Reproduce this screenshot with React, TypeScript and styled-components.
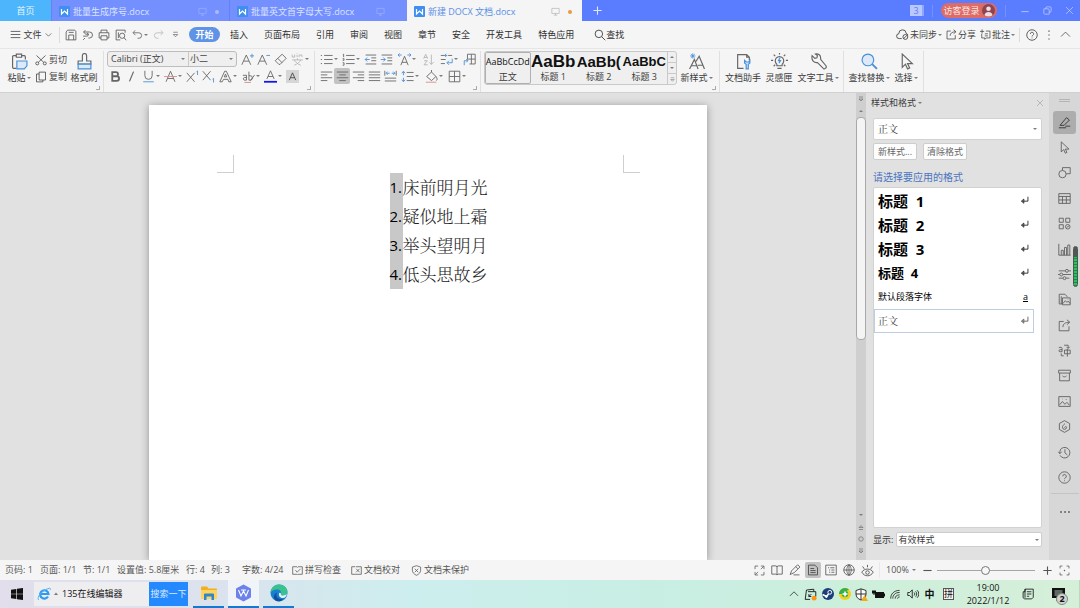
import React from 'react';
import styled, { createGlobalStyle, css } from 'styled-components';

const UI_FONT = '"Open Sans", "Noto Sans CJK SC", sans-serif';
const SERIF_FONT = '"Noto Serif CJK SC", "Noto Sans CJK SC", serif';
const BLUE = '#4a90d9';

const GlobalStyle = createGlobalStyle`
  * { box-sizing: border-box; }
  body { margin: 0; font: 9px/12px ${UI_FONT}; color: #3c3c3c; background: #e1e1e1; overflow: hidden; }
  button, input, select { font: inherit; color: inherit; margin: 0; padding: 0; border: 0; background: none; border-radius: 0; }
  ul, ol { list-style: none; margin: 0; padding: 0; }
  a { color: inherit; text-decoration: none; }
`;

/* ---------- icons ---------- */

const icons: Record<string, React.ReactNode> = {
  menu: <path d="M1 3.500h14M1 8h14M1 12.500h14" />,
  chevDown: <path d="M3 6l5 5 5-5" />,
  chevUp: <path d="M1.500 11L8 4.500l6.500 6.500" />,
  save: <path d="M2 14.500h12.500V3l-1.500-1.500H3.500L1.500 4v10.500zM5 14.500V8h6.500v6.500M5 4.500h6.500" />,
  exportPdf: <path d="M4.500 1.500L2 4l2.500 2.500M2.500 4H10a3.500 3.500 0 0 1 0 8H8.500M9 7H4.500M1.500 9.500h5a2 2 0 0 0 0-4M4 12l-2.500 2.500" />,
  print: <path d="M4 5V1.500h8V5M4 12H1.500V5h13v7H12M4 9h8v5.500H4z" />,
  preview: <><path d="M13.500 5V1.500H1.500v13H7M4.500 4.500V12" /><circle cx="9.500" cy="9" r="3.500" /><path d="M12 11.500l3 3.500" /></>,
  undo: <path d="M4.500 2L1.500 5.500 5 9M2 5.500h8a4 4 0 0 1 0 8H8" />,
  redo: <path d="M11.500 2l3 3.500L11 9M14 5.500H6a4 4 0 0 0 0 8h2" />,
  more: <path d="M4 4h8M4 8l4 4 4-4z" />,
  moreUp: <path d="M4 13h8M4 9l4-4 4 4z" />,
  search: <><circle cx="6.500" cy="6.500" r="5" /><path d="M10.500 10.500L15 15" /></>,
  cloud: <><path d="M7 13H4a3 3 0 0 1-.5-6 4.500 4.500 0 0 1 9-.5 3 3 0 0 1 2 2.500" /><circle cx="11.500" cy="11" r="3" /><path d="M9.500 13l4-4" /></>,
  share: <path d="M7 3H1.500v11.500h12V9M6 10c0-4 3-6 8-6M11 1l3.500 3L11 7" />,
  comment: <path d="M8.500 3H14.500v10H9l-2 2v-2H2.500V7M0 3.500h6M3 .5v6M7 7h4.500M7 10h4.500" />,
  help: <><circle cx="8" cy="8" r="7" /><path d="M5.800 6.500a2.200 2.200 0 1 1 3.200 2c-.7.4-1 .8-1 1.500M8 11.500v1" /></>,
  kebab: <path d="M8 2v1.500M8 7.200v1.500M8 12.500V14" strokeWidth="1.600" />,
  paste: <><path d="M5 14.500H2.500a1 1 0 0 1-1-1v-10a1 1 0 0 1 1-1H5M10 2.500h2.500a1 1 0 0 1 1 1V6M5 1h5v3H5z" /><path d="M5.500 7.500h9.500v4.500l-2.500 3h-7z" fill="#dbe9f8" stroke={BLUE} /></>,
  cut: <><circle cx="3" cy="12.500" r="2" /><circle cx="13" cy="12.500" r="2" /><path d="M4.500 11L14 2M11.500 11L2 2" /></>,
  copy: <path d="M5.500 1.500h8.500v10.500H5.500zM5.500 4h-3.500v10.500h8.500v-2.500" />,
  brush: <><path d="M6 7.500V2.500a2 2 0 0 1 4 0v5h4v3H2v-3z" /><path d="M2 10.500h12v4.500H2z" fill="#dbe9f8" stroke={BLUE} /></>,
  fontUp: <><path d="M1 14.500L6.500 2.500l5.500 12M3.200 10h6.600" /><path d="M11 3.500h5M13.500 1v5" stroke={BLUE} /></>,
  fontDown: <><path d="M1 14.500L6.500 2.500l5.500 12M3.200 10h6.600" /><path d="M11.500 3h4.500" stroke={BLUE} /></>,
  eraser: <path d="M6 14L1.500 9.500 10 1.500l5 5L7.500 14zM4.500 6.500l5.500 5.500" />,
  pinyin: <path d="M1.500 2v3h3V2M7.500 2.500V5M10 5V2.500h3.500V5M7.500.5v1M1.500 8.500h13M8 6.500v2M4 8.500c1.500 3 4 5 8 6.500M12 8.500c-1.500 3-4 5-8 6.500" />,
  bold: <path d="M4 2.500h4.500a2.600 2.600 0 0 1 0 5.200H4zM4 7.700h5.500a2.900 2.900 0 0 1 0 5.800H4z" strokeWidth="2.200" />,
  italic: <path d="M10.500 2L5.500 14" strokeWidth="1.500" />,
  underline: <><path d="M3.500 1v6a4.500 4.500 0 0 0 9 0V1" /><path d="M1.500 14.500h13" stroke={BLUE} /></>,
  strike: <><path d="M2.500 14.500L8 1.500l5.500 13M4.500 10.500h7" /><path d="M0 8h16" stroke="#d98a8a" /></>,
  superscript: <><path d="M1 3.500l9.500 11M10.500 3.500L1 14.500" /><path d="M13 2l1.200-.8v5" stroke={BLUE} /></>,
  subscript: <><path d="M1 1.500l9.500 11M10.500 1.500L1 12.500" /><path d="M13 11.200l1.200-.8v5" stroke={BLUE} /></>,
  textEffect: <path d="M1 14.500L7 1.500h2l6 13h-3l-1-3H5.500l-1.500 3zM6.500 8.500L8 5l1.500 3.500z" />,
  highlight: <><path d="M1 6.500h4.500V12.500H3a1.700 1.700 0 0 1 0-3.300h2.500M8.500 2v10.500h1.500a2.700 2.700 0 0 0 0-5.500H8.500M10.500 13l5-7" /><path d="M3 15.300h8" stroke="#d98a8a" /></>,
  fontColor: <><path d="M3.500 11L8 1l4.500 10M5 8h6" /><path d="M0 14.500h16" stroke="#1414f0" strokeWidth="2.200" /></>,
  shade: <><path d="M0 0h16v16H0z" fill="#d6d6d6" stroke="none" /><path d="M4 12.500L8 3.500l4 9M5.500 9.500h5" stroke="#444" /></>,
  bullets: <path d="M5 3h10.500M5 8h10.500M5 13h10.500M1 3h1.500M1 8h1.500M1 13h1.500" />,
  numbers: <path d="M5 3h10.500M5 8h10.500M5 13h10.500M1 2l1-.5V5M.8 7h1.700v2H.8M.8 12h1.700v3H.8" />,
  outdent: <><path d="M2 2.500h13M9 6h6M9 9.500h6M2 13.500h13" /><path d="M7 8H1.500M4 5.500L1.500 8 4 10.500" stroke={BLUE} /></>,
  indent: <><path d="M2 2.500h13M9 6h6M9 9.500h6M2 13.500h13" /><path d="M1 8h5.500M4 5.500L6.500 8 4 10.500" stroke={BLUE} /></>,
  charScale: <><path d="M3.500 15L8 4l4.500 11M5 11.500h6" /><path d="M0 2.500h4.500M0 2.500L2 .5M0 2.500l2 2M16 2.500h-4.500M16 2.500L14 .5M16 2.500l-2 2" stroke={BLUE} /></>,
  sort: <path d="M2 7l2.500-5.500L7 7M2.500 5.500h4M2.500 9.500h4L2.500 14.500h4.500M11.500 2v12M9 11.500l2.500 2.500 3-3" />,
  wrap: <><path d="M1 3h5M10 3h5M1 8h6M1 13h5" /><path d="M6 3h3M7.500 1L6 3l1.500 2M15 7v5H9M11 9.500L8.500 12 11 14.500" stroke={BLUE} /></>,
  tableTool: <><path d="M5.500 8V1.500H15v12H8M10.300 1.500v12M5.500 7.500H15" /><path d="M1.500 15V9.500H6M4 7.500l2 2-2 2" stroke={BLUE} /></>,
  alignLeft: <path d="M1 2.500h14M1 6h8M1 9.500h14M1 13h8" />,
  alignCenter: <path d="M1 2.500h14M4 6h8M1 9.500h14M4 13h8" />,
  alignRight: <path d="M1 2.500h14M7 6h8M1 9.500h14M7 13h8" />,
  alignJustify: <path d="M1 2.500h14M1 6h14M1 9.500h14M1 13h14" />,
  distribute: <><path d="M1 1v6M15 1v6M1 10h14M1 13.500h14" /><path d="M3 4h4M9.500 4h4M4.500 2L2.500 4l2 2M11.500 2l2 2-2 2" stroke={BLUE} /></>,
  lineSpace: <><path d="M7 3h8.500M7 8h8.500M7 13h8.500" /><path d="M3 2v4.500M3 9.500V14M1 4l2-2.500L5 4M1 12l2 2.500L5 12" stroke={BLUE} /></>,
  bucket: <><path d="M2 8l6-5.500L13.500 8 8 13zM8 2.500V0M13.500 8c1.500 2 2 4 .5 5" /><path d="M1 15h13" stroke="#d98a8a" /></>,
  borders: <path d="M1.500 1.500h13v13h-13zM8 1.500v13M1.500 8h13" />,
  newStyle: <><path d="M1.500 15L6 6l3.500 9M3 12h5.500M7.500 8L10.500 3l5 12M9.200 11.500h5" /><path d="M4.500 .3v5M2 2.800h5M2.700 1l3.600 3.600M6.300 1L2.700 4.600" stroke={BLUE} strokeWidth=".8" /></>,
  docHelper: <><path d="M8 14.500H2.500v-13H11L13.500 4v3M11 1.500V4h2.500" /><path d="M9 7v2.500l1.500 1.200V15h2v-4.300L14 9.500V7l-1 1.500h-2.500z" fill="#cfe3f8" stroke={BLUE} /></>,
  idea: <><path d="M5.500 12V10.500a4 4 0 1 1 5 0V12zM6 14.500h4M8 0v1.500M0 7h2M14 7h2M2.500 1.500l1.500 1.500M13.500 1.500L12 3M2.500 12.500L4 11M13.500 12.500L12 11" /><path d="M8.500 4.500L7 7.200h2L7.500 9.500" stroke={BLUE} /></>,
  wrench: <path d="M2 2.500l2.500 2.500 2-.5.500-2L5 1c2.500-.8 5 .8 5 3.500v1.500l5 6a1.800 1.800 0 0 1-2.500 2.500L7 9C4 9.500 1 7 2 2.500z" />,
  findReplace: <><circle cx="6.500" cy="6.500" r="5.500" fill="#dbe9f8" stroke={BLUE} /><path d="M10.500 10.500L15 15" strokeWidth="1.800" stroke={BLUE} /></>,
  cursor: <path d="M4 1v12.500l3-3 2 4.500 2-1-2-4h4.500z" />,
  close: <path d="M2 2l12 12M14 2L2 14" />,
  minimise: <path d="M2 9h12" />,
  restore: <path d="M5 5V3.500a2 2 0 0 1 2-2h5.500a2 2 0 0 1 2 2V9a2 2 0 0 1-2 2H11M2 5h7a2 2 0 0 1 2 2v7.500H3.500A2 2 0 0 1 1.500 13V5z" />,
  plus: <path d="M8 2v12M2 8h12" strokeWidth="1.600" />,
  minus: <path d="M2 8h12" strokeWidth="1.600" />,
  monitor: <path d="M1.500 2.500h13v9h-13zM8 11.500v3M5 14.500h6" />,
  penEdit: <path d="M2.500 11.500L10.500 2l3.500 3-6.500 6.500zM9 12.500h6M1 14.500h9" />,
  shapes: <><circle cx="5.500" cy="10" r="4.500" /><path d="M5.500 5.500V2h9.500v7.500h-5" /></>,
  grid: <path d="M1 2h14v12H1zM1 5.500h14M1 9.800h14M5.500 5.500V14M10.300 5.500V14" />,
  apps: <><path d="M1.500 1.500h5v5h-5zM9.500 1.500h5v5h-5zM1.500 9.500h5v5h-5z" /><circle cx="12" cy="12" r="2.800" /><path d="M10.500 13l3-2" /></>,
  chart: <path d="M1 1v14h14.500M4 15V9h2.500v6M8 15V5.500h2.500V15M12 15V2.500h2.500V15" />,
  sliders: <><path d="M1 3.500h8M13 3.500h3M0 8h2M6 8h10M1 12.500h5M10 12.500h4" /><circle cx="11" cy="3.500" r="1.800" /><circle cx="4" cy="8" r="1.800" /><circle cx="8" cy="12.500" r="1.800" /></>,
  docImage: <path d="M5 13.500H1.500V1.500h7L11 4v1M4 4v9.500M5.500 6h9.500v8.500H5.500zM6 13l3-3.500 2 2 1.500-1.500 2.500 3M12 8h.5" />,
  translate: <path d="M1 4.500c2-1 4-.5 4 1V9.500H2.500a1.200 1.200 0 0 1 0-2.500H5M7.500 1.500h5v3.500M10.500 3.500L12.500 5.500l2-2M8 7.500h7v4.500H8zM11.500 6v9.500M7 14.500H4v-3" />,
  archive: <path d="M.8 1.500h14.400v3.500H.8zM2 5v9.500h12V5M5.500 8.500c1 1.500 4 1.500 5 0" />,
  image: <path d="M1 2h14v12H1zM2 12l3.500-4 3 3.500L11 9l3 3.500M9.500 5.500h1M5 5h.5" />,
  hex: <path d="M8 .8l6.300 3.500v7.400L8 15.200l-6.300-3.500V4.300zM8.500 4.500c-2 1.500-3 3-3 4.500a2.500 2.500 0 0 0 5 0c0-1.500-2-1-2.500.5" />,
  history: <path d="M2.500 5A6.500 6.500 0 1 1 2.500 11.500M.3 7L2.300 9.500 4.500 7M8.500 4v4.500l3 2.500M2.300 9c-.3-1.500 0-3 .7-4" />,
  dots: <path d="M1.500 8h2.500M6.800 8h2.500M12 8h2.500" strokeWidth="2" />,
  returnMark: <path d="M13 1v6.500H4M7 4.500L3.500 7.500 7 10.500z" />,
  spell: <path d="M1 2.500h6l1 1 1-1h6v11H9l-1 1-1-1H1zM5 7.500l2.500 3 5-5" />,
  proof: <path d="M6 2.500H1v11h6M7 2.500h8v11H7M7.500 5.500l5 5M12.500 5.500l-5 5" />,
  shield: <path d="M8 1l6 2v4.500c0 3.500-2.500 6-6 7.500-3.500-1.500-6-4-6-7.500V3zM5.500 5.500l5 5M10.500 5.500l-5 5" />,
  expand: <path d="M6 1.500H1.500V6M10 1.500h4.500V6M6 14.500H1.500V10M10 14.500h4.500V10M14 2l-4 4M2 14l4-4" />,
  book: <path d="M8 3v11M1 2.500h5.500L8 3.500l1.500-1H15v11H9.500L8 14.500l-1.500-1H1z" />,
  pen: <path d="M1.500 14l2-5L11.500 1l3 3L7 11.500zM6 14.500h8M9 3.500l3 3" />,
  page: <path d="M2 1.500h8.500L14 5v9.500H2zM4.500 6h5M4.500 8.700h7M4.500 11.400h7" strokeWidth="1.300" />,
  outline: <path d="M1 1.500h14v13H1zM4 5h1.500M7 5h5.500M5.500 8h1.500M8.500 8h4M5.500 11h1.500M8.500 11h4" />,
  globe: <><circle cx="8" cy="8" r="7" /><path d="M1 8h14M8 1c-4 4-4 10 0 14M8 1c4 4 4 10 0 14M8 1v14" /></>,
  eye: <><path d="M1 10c3-5 11-5 14 0-3 6-11 6-14 0zM8 1v3M2 3l2 3M14 3l-2 3" /><circle cx="8" cy="10.500" r="2.200" /></>,
  fit: <path d="M5 1.500H1.500V5M11 1.500h3.500V5M5 14.500H1.500V11M11 14.500h3.500V11M7 8h2M8 7v2" />,
  tile: <path d="M12 4V1.500L3 2.500l-1.500 11.500h6M5 4.500h9.500v6H13M6 10.500l3-3M6 7.500v3h3" />,
  wifi: <path d="M1 14C1 7 6 2 14 2M4 14c0-5 3.500-9 10-9M7.500 14c0-3 2-5.500 6.500-5.500M11 14c0-1.500 1-2.500 3-2.500" />,
  volume: <path d="M1 6v4h2.500L7 13.500v-11L3.500 6zM9.500 6c1 1 1 3 0 4M11.500 4.500c2 2 2 5 0 7M13.500 3c3 3 3 7 0 10" />,
  notes: <path d="M4 1.500h11v11l-2 2H3.500l-2-1.500V5H4zM4 1.500V13M6.500 5h6M6.500 8h6M6.500 11h3" />,
};

const Svg = styled.svg<{ $size: number }>`
  display: block;
  flex: none;
  width: ${(p) => p.$size}px;
  height: ${(p) => p.$size}px;
  fill: none;
  stroke: currentColor;
  stroke-width: 1.1;
`;

const Icon = ({ name, size = 13 }: { name: string; size?: number }) => (
  <Svg viewBox="0 0 16 16" $size={size} aria-hidden="true">{icons[name]}</Svg>
);

const Caret = styled.span`
  flex: none;
  border: 2px solid transparent;
  border-top-color: #7d7d7d;
  border-bottom: 0;
`;

/* ---------- shell ---------- */

const Shell = styled.div`
  display: grid;
  grid-template-rows: 21px 27px 45px minmax(0, 1fr) 20px 28px;
  height: 100vh;
`;

/* ---------- title bar ---------- */

const TitleBar = styled.header`
  display: flex;
  align-items: stretch;
  background: #5a7cff;
  color: #fff;
`;

const HomeTab = styled.button`
  flex: 0 0 51px;
  background: #4db5fb;
  color: #e8f6ff;
`;

const Tab = styled.button<{ $active?: boolean }>`
  display: flex;
  align-items: center;
  flex: 0 1 178px;
  gap: 3px;
  padding: 2px 10px 0 7px;
  border-left: 1px solid #6581f5;
  background: #7490ff;
  color: #dbe3ff;
  white-space: nowrap;
  ${(p) => p.$active && css`
    flex-basis: 175px;
    padding-left: 6px;
    border-left-color: #f5f5f5;
    background: #f5f5f5;
    color: #5b8fe6;
  `}
`;

const TabName = styled.span`
  flex: 1;
  text-align: left;
`;

const TabState = styled.span<{ $active?: boolean }>`
  display: flex;
  align-items: center;
  color: ${(p) => (p.$active ? '#aaa' : '#9db2ff')};
`;

const Dot = styled.span<{ $color: string }>`
  width: 4px;
  height: 4px;
  margin-left: 8px;
  border-radius: 50%;
  background: ${(p) => p.$color};
`;

const DocBadge = styled.svg`
  width: 11px;
  height: 11px;
  flex: none;
`;

const NewTab = styled.button`
  display: grid;
  place-items: center;
  width: 31px;
  color: #dfe6ff;
`;

const WindowTools = styled.div`
  display: flex;
  align-items: center;
  margin-left: auto;
  color: #d5deff;
`;

const WindowButton = styled.button`
  display: grid;
  place-items: center;
  width: 22px;
  height: 21px;
`;

const TabCount = styled.button`
  width: 14px;
  height: 11px;
  background: #b9c8ff;
  color: #5a7cff;
  line-height: 11px;
  border-right: 2px solid #8fa6ff;
`;

const TitleDivider = styled.span`
  width: 1px;
  height: 12px;
  margin: 0 8px;
  background: #7590ff;
`;

const Login = styled.button`
  display: flex;
  align-items: center;
  justify-content: center;
  gap: 2px;
  width: 56px;
  height: 15px;
  border-radius: 8px;
  background: #dd6c66;
  color: #fbe5e3;
`;

/* ---------- menu bar ---------- */

const MenuBar = styled.nav`
  display: flex;
  align-items: center;
  background: #f5f5f5;
  white-space: nowrap;
`;

const FileMenu = styled.button`
  display: flex;
  align-items: center;
  justify-content: space-between;
  width: 60px;
  height: 16px;
  padding: 0 6px 0 10px;
  border-right: 1px solid #dcdcdc;
`;

const QuickTools = styled.div`
  display: flex;
  align-items: center;
  padding: 0 5px 0 3px;
  color: #555;
`;

const StartTab = styled.button`
  width: 31px;
  height: 15px;
  border-radius: 8px;
  background: #5f93e6;
  color: #fff;
  font-weight: 700;
`;

const MenuItems = styled.div`
  display: flex;
  align-items: center;
  gap: 16px;
  margin-left: 10px;
`;

const MenuItem = styled.button<{ $search?: boolean }>`
  display: flex;
  align-items: center;
  color: #2f2f2f;
  ${(p) => p.$search && css`margin-left: 4px;`}
`;

const MenuRight = styled.div`
  display: flex;
  align-items: center;
  margin-left: auto;
  padding-right: 6px;
  color: #444;
`;

const SideAction = styled.button`
  display: flex;
  align-items: center;
  gap: 1px;
  margin-right: 4px;
`;

const MenuDivider = styled.span`
  width: 1px;
  height: 14px;
  margin-right: 4px;
  background: #dcdcdc;
`;

/* ---------- ribbon ---------- */

const Ribbon = styled.section`
  display: flex;
  padding-top: 2px;
  border-top: 1px solid #e6e6e6;
  border-bottom: 1px solid #d0d0d0;
  background: #f5f5f5;
  color: #666;
  white-space: nowrap;
`;

const Group = styled.div<{ $width: number; $corner?: boolean; $columns?: boolean }>`
  position: relative;
  display: flex;
  flex-direction: ${(p) => (p.$columns ? 'row' : 'column')};
  flex: none;
  width: ${(p) => p.$width}px;
  padding: 0 3px;
  border-right: 1px solid #e0e0e0;
  ${(p) => p.$corner && css`
    &::after {
      content: '';
      position: absolute;
      right: 3px;
      bottom: 2px;
      width: 3px;
      height: 3px;
      border: solid #aaa;
      border-width: 0 1px 1px 0;
    }
  `}
`;

const ToolRow = styled.div`
  display: flex;
  height: 17px;
`;

const Tool = styled.button<{ $width?: number; $active?: boolean; $dim?: boolean }>`
  display: flex;
  align-items: center;
  justify-content: center;
  gap: 1px;
  flex: none;
  width: ${(p) => p.$width ?? 16}px;
  height: 16px;
  border-radius: 2px;
  background: ${(p) => (p.$active ? '#c2c2c2' : 'transparent')};
  ${(p) => p.$dim && css`color: #b5b5b5;`}
`;

const BigTool = styled.button<{ $width: number }>`
  display: flex;
  flex-direction: column;
  align-items: center;
  flex: none;
  gap: 2px;
  width: ${(p) => p.$width}px;
  height: 34px;
  padding-top: 2px;
`;

const ToolLabel = styled.span`
  display: flex;
  align-items: center;
  gap: 1px;
  color: #3c3c3c;
`;

const SmallStack = styled.div`
  display: flex;
  flex-direction: column;
  width: 32px;
`;

const SmallTool = styled.button`
  display: flex;
  align-items: center;
  gap: 2px;
  height: 17px;
  color: #4a4a4a;
`;

const FontBoxes = styled.div`
  display: flex;
  width: 130px;
  height: 16px;
  margin-right: 2px;
  border: 1px solid #bdbdbd;
  border-radius: 3px;
  background: #efefef;
  color: #444;
`;

const Picker = styled.label<{ $width?: number }>`
  display: flex;
  align-items: center;
  flex: ${(p) => (p.$width ? `0 0 ${p.$width}px` : '1')};
  padding: 0 3px;
  & + & { padding-left: 1px; border-left: 1px solid #c9c9c9; }
`;

const PlainSelect = styled.select`
  flex: 1;
  min-width: 0;
  appearance: none;
  outline: 0;
  text-overflow: clip;
`;

const Gallery = styled.div`
  display: flex;
  flex: none;
  width: 193px;
  height: 34px;
  border: 1px solid #c9c9c9;
  border-radius: 3px;
  background: #efefef;
  overflow: hidden;
`;

const StyleCard = styled.button<{ $active?: boolean }>`
  display: flex;
  flex-direction: column;
  align-items: center;
  flex: 1 1 0;
  border-radius: 2px;
  color: #3c3c3c;
  ${(p) => p.$active && css`box-shadow: inset 0 0 0 1px #b0b0b0;`}
`;

const Sample = styled.span<{ $size: number; $heavy?: boolean }>`
  height: 19px;
  color: #111;
  font: ${(p) => p.$size}px/20px ${UI_FONT};
  ${(p) => p.$heavy && css`
    font-family: "Liberation Sans", sans-serif;
    font-weight: 700;
  `}
`;

const GalleryScroll = styled.div`
  display: flex;
  flex-direction: column;
  flex: none;
  width: 9px;
  border-left: 1px solid #c9c9c9;
`;

const ScrollStep = styled.button`
  display: grid;
  place-items: center;
  flex: 1;
  & + & { border-top: 1px solid #c9c9c9; }
`;

/* ---------- workspace ---------- */

const Workspace = styled.main`
  display: flex;
  min-height: 0;
`;

const Canvas = styled.section`
  flex: 1;
  min-width: 0;
  padding-top: 12px;
  overflow: hidden;
  background: #e1e1e1;
`;

const Paper = styled.article`
  width: 100%;
  max-width: 558px;
  min-height: 100%;
  margin: 0 auto;
  padding: 50px 67px 0 68px;
  background: #fff;
  box-shadow: 0 1px 8px rgba(0, 0, 0, 0.35);
`;

const Margins = styled.div`
  display: flex;
  justify-content: space-between;
`;

const MarginCorner = styled.span<{ $side: 'left' | 'right' }>`
  width: 17px;
  height: 18px;
  border-bottom: 1px solid #cfcfcf;
  border-${(p) => (p.$side === 'left' ? 'right' : 'left')}: 1px solid #cfcfcf;
`;

const Poem = styled.ol`
  width: max-content;
  margin: 0 auto;
  padding-left: 20px;
`;

const PoemLine = styled.li`
  display: flex;
  font: 300 17px/27px ${SERIF_FONT};
  color: #222;
`;

const LineNumber = styled.span`
  width: 13px;
  background: #c8c8c8;
  font: 15px/29px ${UI_FONT};
  color: #000;
`;

const ScrollBar = styled.div`
  display: flex;
  flex-direction: column;
  align-items: center;
  flex: 0 0 10px;
  padding-bottom: 3px;
  background: #cfcfcf;
  color: #555;
`;

const ScrollThumb = styled.div`
  width: 10px;
  height: 223px;
  margin-bottom: auto;
  border: 1px solid #a8a8a8;
  border-radius: 4px;
  background: #f4f4f4;
`;

const ScrollMark = styled.button`
  display: grid;
  place-items: center;
  width: 10px;
  height: 12px;
`;

const CaretUp = styled(Caret)`
  transform: rotate(180deg);
`;

const Panel = styled.aside`
  display: flex;
  flex-direction: column;
  align-items: stretch;
  flex: 0 0 183px;
  padding: 3px 7px 13px 7px;
  background: #e1e1e1;
`;

const PanelHead = styled.div`
  display: flex;
  align-items: center;
  gap: 2px;
  height: 13px;
  margin: 0 -2px;
  button { margin-left: auto; color: #999; }
`;

const StyleSelect = styled.label`
  display: flex;
  align-items: center;
  height: 22px;
  margin-top: 9px;
  padding: 0 4px;
  border: 1px solid #d2d2d2;
  border-radius: 2px;
  background: #fff;
  font: 10px/12px ${SERIF_FONT};
`;

const PanelButtons = styled.div`
  display: flex;
  gap: 6px;
  margin-top: 3px;
`;

const PanelButton = styled.button`
  width: 44px;
  height: 17px;
  border: 1px solid #cdcdcd;
  border-radius: 2px;
  background: #fdfdfd;
  color: #666;
`;

const PanelHint = styled.p`
  margin: 10px 0 3px;
  font-size: 10px;
  line-height: 14px;
  color: #4a74c0;
`;

const StyleList = styled.ul`
  flex: 1;
  min-height: 0;
  padding: 1px 7px 0 0;
  border: 1px solid #d2d2d2;
  border-radius: 2px;
  background: #fff;
`;

const StyleEntry = styled.button<{ $size: number; $bold?: boolean; $serif?: boolean; $selected?: boolean }>`
  display: flex;
  align-items: center;
  justify-content: space-between;
  width: 100%;
  height: 24px;
  padding: 0 3px;
  border: 1px solid ${(p) => (p.$selected ? '#bccde4' : 'transparent')};
  color: ${(p) => (p.$selected ? '#444' : '#000')};
  font: ${(p) => (p.$bold ? 700 : 400)} ${(p) => p.$size}px/20px ${(p) => (p.$serif ? SERIF_FONT : UI_FONT)};
  white-space: pre;
`;

const CharMark = styled.u`
  width: 9px;
  font: 9px/12px ${UI_FONT};
`;

const ShowRow = styled.label`
  display: flex;
  align-items: center;
  gap: 3px;
  height: 15px;
  margin-top: 4px;
`;

const ShowBox = styled.span`
  display: flex;
  align-items: center;
  flex: 1;
  height: 15px;
  padding: 0 2px 0 1px;
  border: 1px solid #cdcdcd;
  border-radius: 2px;
  background: #fff;
`;

const Rail = styled.aside`
  position: relative;
  display: flex;
  flex-direction: column;
  align-items: center;
  flex: 0 0 31px;
  background: #d7d7d7;
  color: #606060;
`;

const RailGrip = styled.span`
  width: 11px;
  height: 3px;
  margin: 6px 0 9px;
  border: solid #b5b5b5;
  border-width: 1px 0;
`;

const RailButton = styled.button<{ $active?: boolean }>`
  display: grid;
  place-items: center;
  ${(p) => p.$active && css`
    width: 23px;
    height: 23px;
    flex: none;
    border-radius: 3px;
    background: #adadad;
    color: #333;
  `}
`;

const RailIcons = styled.div`
  display: flex;
  flex-direction: column;
  justify-content: space-between;
  flex: 0 1 343px;
  margin: 7px 0 9px;
`;

const RailDivider = styled.span`
  flex: none;
  width: 28px;
  height: 1px;
  margin-bottom: 12px;
  background: #c4c4c4;
`;

const LevelMeter = styled.span`
  position: absolute;
  top: 153px;
  right: 2px;
  width: 5px;
  height: 41px;
  border: 1px solid #4a5a50;
  border-radius: 3px;
  background: linear-gradient(#555 0 10px, transparent 10px), repeating-linear-gradient(#2fbf5f 0 2px, #1c8a42 2px 3px);
`;

/* ---------- status bar ---------- */

const StatusBar = styled.footer`
  display: flex;
  align-items: center;
  padding-left: 5px;
  background: #f5f5f5;
  color: #555;
  white-space: nowrap;
`;

const StatusItem = styled.span<{ $width: number }>`
  display: flex;
  align-items: center;
  gap: 2px;
  flex: none;
  width: ${(p) => p.$width}px;
`;

const ViewTools = styled.div`
  display: flex;
  align-items: center;
  gap: 2px;
  margin-left: auto;
`;

const ZoomTools = styled.div`
  display: flex;
  align-items: center;
  margin-left: 4px;
  padding: 0 7px 0 6px;
  border-left: 1px solid #e8e8e8;
`;

const ZoomValue = styled.button`
  display: flex;
  align-items: center;
  gap: 3px;
  width: 34px;
`;

const ZoomSlider = styled.input`
  appearance: none;
  width: 98px;
  height: 10px;
  margin: 0 4px 0 3px;
  &::-webkit-slider-runnable-track { height: 1px; background: #a5a5a5; }
  &::-webkit-slider-thumb {
    appearance: none;
    width: 9px;
    height: 9px;
    margin-top: -4px;
    border: 1px solid #777;
    border-radius: 50%;
    background: #f7f7f7;
  }
`;

/* ---------- taskbar ---------- */

const TaskBar = styled.footer`
  display: flex;
  align-items: center;
  background: linear-gradient(90deg, #e2deec 0%, #dbe2ee 20%, #cdeeee 38%, #c8eee4 60%, #cdefdb 80%, #d6efd9 100%);
  color: #111;
`;

const StartButton = styled.button`
  display: grid;
  place-items: center;
  width: 34px;
  height: 28px;
`;

const SearchForm = styled.form`
  display: flex;
  align-items: center;
  width: 154px;
  height: 24px;
  background: #eeeef0;
`;

const BrowserSign = styled.span`
  display: flex;
  align-items: center;
  gap: 3px;
  width: 28px;
  padding-left: 3px;
`;

const SearchInput = styled.input`
  flex: 1;
  min-width: 0;
  outline: 0;
`;

const SearchButton = styled.button`
  width: 39px;
  height: 24px;
  background: #2488ff;
  color: #d8eaff;
`;

const TaskApps = styled.div`
  display: flex;
  gap: 4px;
  margin-left: 5px;
`;

const TaskApp = styled.button<{ $active?: boolean }>`
  display: grid;
  place-items: center;
  width: 31px;
  height: 28px;
  border-bottom: 2px solid #0f7ad8;
  background: ${(p) => (p.$active ? 'rgba(255,255,255,.6)' : 'transparent')};
`;

const Tray = styled.div`
  display: flex;
  align-items: center;
  margin-left: auto;
`;

const TrayItem = styled.button<{ $wide?: boolean }>`
  display: grid;
  place-items: center;
  width: ${(p) => (p.$wide ? 21 : 17)}px;
  height: 28px;
  font-size: 10px;
  font-weight: 700;
`;

const ImeMode = styled.span`
  width: 11px;
  height: 12px;
  border: 1px solid #555;
  background: #f5f5f5;
  font-size: 9px;
  line-height: 10px;
  font-weight: 400;
`;

const Clock = styled.time`
  width: 58px;
  text-align: center;
  line-height: 13px;
`;

const Messages = styled.button`
  position: relative;
  display: grid;
  place-items: center;
  width: 42px;
  height: 28px;
  border-right: 1px solid #b9d8c0;
`;

const MessageCount = styled.span`
  position: absolute;
  right: 11px;
  bottom: 3px;
  width: 12px;
  height: 12px;
  border: 1px solid #888;
  border-radius: 50%;
  background: #cfd6d0;
  line-height: 10px;
  font-weight: 700;
`;

/* ---------- data ---------- */

type ToolSpec = { icon: string; label: string; width?: number; caret?: boolean; active?: boolean; dim?: boolean };

const fontRow1: ToolSpec[] = [
  { icon: 'fontUp', label: '增大字号' },
  { icon: 'fontDown', label: '减小字号' },
  { icon: 'eraser', label: '清除格式', width: 18 },
  { icon: 'pinyin', label: '拼音指南', width: 22, caret: true, dim: true },
];
const fontRow2: ToolSpec[] = [
  { icon: 'bold', label: '加粗' },
  { icon: 'italic', label: '倾斜' },
  { icon: 'underline', label: '下划线', width: 23, caret: true },
  { icon: 'strike', label: '删除线', width: 22, caret: true },
  { icon: 'superscript', label: '上标' },
  { icon: 'subscript', label: '下标' },
  { icon: 'textEffect', label: '文字效果', width: 24, caret: true },
  { icon: 'highlight', label: '突出显示', width: 22, caret: true },
  { icon: 'fontColor', label: '字体颜色', width: 22, caret: true },
  { icon: 'shade', label: '字符底纹' },
];
const paraRow1: ToolSpec[] = [
  { icon: 'bullets', label: '项目符号', width: 22, caret: true },
  { icon: 'numbers', label: '编号', width: 22, caret: true },
  { icon: 'outdent', label: '减少缩进' },
  { icon: 'indent', label: '增加缩进' },
  { icon: 'charScale', label: '中文版式', width: 25, caret: true },
  { icon: 'sort', label: '排序', width: 18, dim: true },
  { icon: 'wrap', label: '显示标记', width: 24, caret: true },
  { icon: 'tableTool', label: '制表位' },
];
const paraRow2: ToolSpec[] = [
  { icon: 'alignLeft', label: '左对齐' },
  { icon: 'alignCenter', label: '居中', active: true },
  { icon: 'alignRight', label: '右对齐' },
  { icon: 'alignJustify', label: '两端对齐' },
  { icon: 'distribute', label: '分散对齐' },
  { icon: 'lineSpace', label: '行距', width: 24, caret: true },
  { icon: 'bucket', label: '底纹', width: 24, caret: true },
  { icon: 'borders', label: '边框', width: 22, caret: true },
];

const menuItems = ['插入', '页面布局', '引用', '审阅', '视图', '章节', '安全', '开发工具', '特色应用'];
const poem = ['床前明月光', '疑似地上霜', '举头望明月', '低头思故乡'];
const styleEntries = [
  { name: '标题  1', size: 15, bold: true, serif: false },
  { name: '标题  2', size: 15, bold: true, serif: false },
  { name: '标题  3', size: 15, bold: true, serif: false },
  { name: '标题  4', size: 13, bold: true, serif: false },
  { name: '默认段落字体', size: 9, char: true },
  { name: '正文', size: 10, serif: true, selected: true },
];
const railIcons = ['cursor', 'shapes', 'grid', 'apps', 'chart', 'sliders', 'docImage', 'share', 'translate', 'archive', 'image', 'hex', 'history', 'help'];
const gallery = [
  { sample: 'AaBbCcDd', label: '正文', size: 9 },
  { sample: 'AaBb', label: '标题 1', size: 17 },
  { sample: 'AaBb(', label: '标题 2', size: 15 },
  { sample: 'AaBbC', label: '标题 3', size: 13 },
];

/* ---------- pieces ---------- */

const Tools = ({ items }: { items: ToolSpec[] }) => (
  <>
    {items.map((t) => (
      <Tool key={t.label} aria-label={t.label} $width={t.width} $active={t.active} $dim={t.dim}>
        <Icon name={t.icon} />
        {t.caret && <Caret />}
      </Tool>
    ))}
  </>
);

const Big = ({ icon, label, width, caret }: { icon: string; label: string; width: number; caret?: boolean }) => (
  <BigTool $width={width}>
    <Icon name={icon} size={17} />
    <ToolLabel>{label}{caret && <Caret />}</ToolLabel>
  </BigTool>
);

const DocTab = ({ name, active, dot }: { name: string; active?: boolean; dot?: string }) => (
  <Tab $active={active}>
    <DocBadge viewBox="0 0 11 11" aria-hidden="true">
      <rect width="11" height="11" rx="1" fill="#3f8ff0" />
      <path d="M2.500 3v5l3-3 3 3V3" fill="none" stroke="#fff" strokeWidth="1.200" />
    </DocBadge>
    <TabName>{name}</TabName>
    <TabState $active={active}>
      <Icon name="monitor" size={9} />
      <Dot $color={dot ?? 'transparent'} />
    </TabState>
  </Tab>
);

export default function App() {
  return (
    <>
      <GlobalStyle />
      <Shell>
        <TitleBar>
          <HomeTab>首页</HomeTab>
          <DocTab name="批量生成序号.docx" dot="#a9bbff" />
          <DocTab name="批量英文首字母大写.docx" />
          <DocTab name="新建 DOCX 文档.docx" active dot="#e8984a" />
          <NewTab aria-label="新建标签"><Icon name="plus" size={11} /></NewTab>
          <WindowTools>
            <TabCount>3</TabCount>
            <TitleDivider />
            <Login>
              访客登录
              <svg width="13" height="13" viewBox="0 0 13 13" aria-hidden="true">
                <circle cx="6.500" cy="6.500" r="6.500" fill="#8d4552" />
                <circle cx="6.500" cy="4.800" r="2.300" fill="#f0dcdc" />
                <path d="M2.500 11c.5-4 7.500-4 8 0-2 2-6 2-8 0z" fill="#f0dcdc" />
              </svg>
            </Login>
            <TitleDivider />
            <WindowButton aria-label="最小化"><Icon name="minimise" size={10} /></WindowButton>
            <WindowButton aria-label="还原"><Icon name="restore" size={9} /></WindowButton>
            <WindowButton aria-label="关闭"><Icon name="close" size={9} /></WindowButton>
          </WindowTools>
        </TitleBar>

        <MenuBar>
          <FileMenu><Icon name="menu" size={11} />文件<Icon name="chevDown" size={9} /></FileMenu>
          <QuickTools>
            <Tool aria-label="保存"><Icon name="save" size={12} /></Tool>
            <Tool aria-label="输出为PDF" $width={17}><Icon name="exportPdf" size={12} /></Tool>
            <Tool aria-label="打印"><Icon name="print" size={12} /></Tool>
            <Tool aria-label="打印预览" $width={17}><Icon name="preview" size={12} /></Tool>
            <Tool aria-label="撤销" $width={21}><Icon name="undo" size={11} /><Caret /></Tool>
            <Tool aria-label="恢复" $dim><Icon name="redo" size={11} /></Tool>
            <Tool aria-label="自定义" $width={18}><Icon name="more" size={9} /></Tool>
          </QuickTools>
          <StartTab>开始</StartTab>
          <MenuItems>
            {menuItems.map((m) => <MenuItem key={m}>{m}</MenuItem>)}
            <MenuItem $search><Icon name="search" size={12} />查找</MenuItem>
          </MenuItems>
          <MenuRight>
            <SideAction><Icon name="cloud" size={13} />未同步<Caret /></SideAction>
            <SideAction><Icon name="share" size={11} />分享</SideAction>
            <SideAction><Icon name="comment" size={11} />批注<Caret /></SideAction>
            <MenuDivider />
            <Tool aria-label="帮助"><Icon name="help" size={12} /></Tool>
            <Tool aria-label="更多" $width={17}><Icon name="kebab" size={12} /></Tool>
            <Tool aria-label="收起功能区" $width={17}><Icon name="chevUp" size={11} /></Tool>
          </MenuRight>
        </MenuBar>

        <Ribbon>
          <Group $width={104} $corner $columns>
            <Big icon="paste" label="粘贴" width={32} caret />
            <SmallStack>
              <SmallTool><Icon name="cut" size={12} />剪切</SmallTool>
              <SmallTool><Icon name="copy" size={12} />复制</SmallTool>
            </SmallStack>
            <Big icon="brush" label="格式刷" width={34} />
          </Group>
          <Group $width={211} $corner>
            <ToolRow>
              <FontBoxes>
                <Picker>
                  <PlainSelect aria-label="字体"><option>Calibri (正文)</option></PlainSelect>
                  <Caret />
                </Picker>
                <Picker $width={48}>
                  <PlainSelect aria-label="字号"><option>小二</option></PlainSelect>
                  <Caret />
                </Picker>
              </FontBoxes>
              <Tools items={fontRow1} />
            </ToolRow>
            <ToolRow><Tools items={fontRow2} /></ToolRow>
          </Group>
          <Group $width={166} $corner>
            <ToolRow><Tools items={paraRow1} /></ToolRow>
            <ToolRow><Tools items={paraRow2} /></ToolRow>
          </Group>
          <Group $width={239} $corner $columns>
            <Gallery>
              {gallery.map((g, i) => (
                <StyleCard key={g.label} $active={i === 0}>
                  <Sample $size={g.size} $heavy={i > 0}>{g.sample}</Sample>
                  {g.label}
                </StyleCard>
              ))}
              <GalleryScroll>
                <ScrollStep aria-label="上一行"><CaretUp /></ScrollStep>
                <ScrollStep aria-label="下一行"><Caret /></ScrollStep>
                <ScrollStep aria-label="展开"><Icon name="more" size={7} /></ScrollStep>
              </GalleryScroll>
            </Gallery>
            <Big icon="newStyle" label="新样式" width={39} caret />
          </Group>
          <Group $width={124} $columns>
            <Big icon="docHelper" label="文档助手" width={40} />
            <Big icon="idea" label="灵感匣" width={32} />
            <Big icon="wrench" label="文字工具" width={46} caret />
          </Group>
          <Group $width={80} $columns>
            <Big icon="findReplace" label="查找替换" width={44} caret />
            <Big icon="cursor" label="选择" width={30} caret />
          </Group>
        </Ribbon>

        <Workspace>
          <Canvas>
            <Paper>
              <Margins><MarginCorner $side="left" /><MarginCorner $side="right" /></Margins>
              <Poem>
                {poem.map((line, i) => (
                  <PoemLine key={line}><LineNumber>{i + 1}.</LineNumber>{line}</PoemLine>
                ))}
              </Poem>
            </Paper>
          </Canvas>
          <ScrollBar>
            <ScrollMark aria-label="标尺"><Icon name="more" size={8} /></ScrollMark>
            <ScrollMark aria-label="向上"><CaretUp /></ScrollMark>
            <ScrollThumb />
            <ScrollMark aria-label="向下"><Caret /></ScrollMark>
            <ScrollMark aria-label="上一页"><Icon name="moreUp" size={8} /></ScrollMark>
            <ScrollMark aria-label="浏览对象"><svg width="6" height="6" aria-hidden="true"><circle cx="3" cy="3" r="2.200" fill="none" stroke="#888" /></svg></ScrollMark>
            <ScrollMark aria-label="下一页"><Icon name="more" size={8} /></ScrollMark>
          </ScrollBar>
          <Panel>
            <PanelHead>
              样式和格式<Caret />
              <button aria-label="关闭窗格"><Icon name="close" size={8} /></button>
            </PanelHead>
            <StyleSelect>
              <PlainSelect aria-label="当前样式"><option>正文</option></PlainSelect>
              <Caret />
            </StyleSelect>
            <PanelButtons>
              <PanelButton>新样式...</PanelButton>
              <PanelButton>清除格式</PanelButton>
            </PanelButtons>
            <PanelHint>请选择要应用的格式</PanelHint>
            <StyleList>
              {styleEntries.map((s) => (
                <li key={s.name}>
                  <StyleEntry $size={s.size} $bold={s.bold} $serif={s.serif} $selected={s.selected}>
                    {s.name}
                    {s.char ? <CharMark>a</CharMark> : <Icon name="returnMark" size={11} />}
                  </StyleEntry>
                </li>
              ))}
            </StyleList>
            <ShowRow>
              显示:
              <ShowBox>
                <PlainSelect><option>有效样式</option></PlainSelect>
                <Caret />
              </ShowBox>
            </ShowRow>
          </Panel>
          <Rail>
            <RailGrip />
            <RailButton $active aria-label="样式"><Icon name="penEdit" size={13} /></RailButton>
            <RailIcons>
              {railIcons.map((r) => <RailButton key={r} aria-label={r}><Icon name={r} size={13} /></RailButton>)}
            </RailIcons>
            <RailDivider />
            <RailButton aria-label="更多"><Icon name="dots" size={12} /></RailButton>
            <LevelMeter />
          </Rail>
        </Workspace>

        <StatusBar>
          <StatusItem $width={35}>页码: 1</StatusItem>
          <StatusItem $width={43}>页面: 1/1</StatusItem>
          <StatusItem $width={34}>节: 1/1</StatusItem>
          <StatusItem $width={69}>设置值: 5.8厘米</StatusItem>
          <StatusItem $width={25}>行: 4</StatusItem>
          <StatusItem $width={31}>列: 3</StatusItem>
          <StatusItem $width={50}>字数: 4/24</StatusItem>
          <StatusItem $width={59}><Icon name="spell" size={11} />拼写检查</StatusItem>
          <StatusItem $width={60}><Icon name="proof" size={11} />文档校对</StatusItem>
          <StatusItem $width={60}><Icon name="shield" size={11} />文档未保护</StatusItem>
          <ViewTools>
            <Tool aria-label="全屏"><Icon name="expand" size={11} /></Tool>
            <Tool aria-label="阅读版式"><Icon name="book" size={12} /></Tool>
            <Tool aria-label="写作模式"><Icon name="pen" size={12} /></Tool>
            <Tool aria-label="页面视图" $active><Icon name="page" size={12} /></Tool>
            <Tool aria-label="大纲"><Icon name="outline" size={12} /></Tool>
            <Tool aria-label="Web版式"><Icon name="globe" size={12} /></Tool>
            <Tool aria-label="护眼模式"><Icon name="eye" size={13} /></Tool>
          </ViewTools>
          <ZoomTools>
            <ZoomValue>100%<Caret /></ZoomValue>
            <Tool aria-label="缩小" $width={14}><Icon name="minus" size={11} /></Tool>
            <ZoomSlider type="range" min={0} max={100} defaultValue={49} aria-label="显示比例" />
            <Tool aria-label="放大"><Icon name="plus" size={11} /></Tool>
            <Tool aria-label="最佳显示比例" $width={18}><Icon name="fit" size={11} /></Tool>
          </ZoomTools>
        </StatusBar>

        <TaskBar>
          <StartButton aria-label="开始菜单">
            <svg width="12" height="12" viewBox="0 0 12 12" aria-hidden="true">
              <path d="M0 1.700l5.300-.8v4.800H0zM6 .8L12 0v5.700H6zM0 6.300h5.300v4.800L0 10.300zM6 6.300h6V12l-6-.8z" fill="#111" />
            </svg>
          </StartButton>
          <SearchForm onSubmit={(e) => e.preventDefault()}>
            <BrowserSign>
              <svg width="14" height="14" viewBox="0 0 14 14" aria-hidden="true">
                <path d="M11 9.500a4.200 4.200 0 1 1 .5-2.500H4" fill="none" stroke="#2f9bf0" strokeWidth="2.200" />
                <path d="M1.500 13C-.5 10 5 3 12.500 1.200c1-.1 1.200.8.5 2" fill="none" stroke="#55b4f5" strokeWidth="1" />
              </svg>
              <svg width="4" height="4" viewBox="0 0 4 4" aria-hidden="true"><path d="M0 3l2-2.500L4 3z" fill="#777" /></svg>
            </BrowserSign>
            <SearchInput aria-label="搜索" defaultValue="135在线编辑器" />
            <SearchButton>搜索一下</SearchButton>
          </SearchForm>
          <TaskApps>
            <TaskApp aria-label="文件资源管理器">
              <svg width="16" height="14" viewBox="0 0 16 14" aria-hidden="true">
                <path d="M0 1.500A1 1 0 0 1 1 .5h5l1.500 2H15a1 1 0 0 1 1 1V13H0z" fill="#f2b01e" />
                <path d="M0 4h16v9H0z" fill="#ffd45e" />
                <path d="M3 14V8.500a1 1 0 0 1 1-1h8a1 1 0 0 1 1 1V14h-2.500v-3.500h-5V14z" fill="#2f86c9" />
              </svg>
            </TaskApp>
            <TaskApp $active aria-label="WPS 文字">
              <svg width="17" height="18" viewBox="0 0 17 18" aria-hidden="true">
                <path d="M8.500.5l7 3.800a1 1 0 0 1 .5 1v7.400a1 1 0 0 1-.5 1l-7 3.800-7-3.800a1 1 0 0 1-.5-1V5.300a1 1 0 0 1 .5-1z" fill="#6b82ec" />
                <path d="M3.500 6l2.500 6 2.500-5 2.500 5 2.500-6M6 6h5" fill="none" stroke="#fff" strokeWidth="1.100" />
              </svg>
            </TaskApp>
            <TaskApp aria-label="Microsoft Edge">
              <svg width="18" height="18" viewBox="0 0 18 18" aria-hidden="true">
                <circle cx="9" cy="9" r="8.500" fill="#1b7fd0" />
                <path d="M.6 8.500C1 3.500 4.500.5 9 .5c5 0 8.500 3.500 8.500 7 0 2.700-2 4-4.500 4-2 0-2.500-.8-2-1.600C12 7 9 5 6.500 5.500 3.500 5.700 1.500 7 .6 8.500z" fill="#39c28e" />
                <path d="M7 8.500c-2 3.500 1 7.800 6.500 6.500-2 2.500-5 3-8 1.500C3 14 3.500 10 7 8.500z" fill="#0f4f9e" />
                <path d="M11 9.900c-.5.800 0 1.600 2 1.600 1.600 0 3-.5 3.900-1.700-.2 2-1.200 3.300-2.400 4-3.500.7-6-1-5.500-4.300.5-1.200 1.700-1 2 .4z" fill="#e8f5f5" />
              </svg>
            </TaskApp>
          </TaskApps>
          <Tray>
            <TrayItem aria-label="显示隐藏的图标"><Icon name="chevUp" size={10} /></TrayItem>
            <TrayItem aria-label="截图">
              <Svg viewBox="0 0 16 16" $size={13} aria-hidden="true">{icons.tile}<circle cx="12.500" cy="12.500" r="3" fill="#ff9416" stroke="none" /></Svg>
            </TrayItem>
            <TrayItem aria-label="Steam">
              <svg width="12" height="12" viewBox="0 0 12 12" aria-hidden="true">
                <circle cx="6" cy="6" r="6" fill="#1c3f78" />
                <circle cx="7.800" cy="4.300" r="1.900" fill="none" stroke="#fff" />
                <path d="M.5 6.500L4.500 8.500 6.500 6" fill="none" stroke="#fff" strokeWidth="1.500" />
                <circle cx="4.300" cy="8.600" r="1.300" fill="#fff" />
              </svg>
            </TrayItem>
            <TrayItem aria-label="安全卫士">
              <svg width="12" height="12" viewBox="0 0 12 12" aria-hidden="true">
                <circle cx="6" cy="6" r="6" fill="#f5cf1b" />
                <path d="M0 6a6 6 0 0 1 10-4.400L7 3.200A3 3 0 0 0 3 6z" fill="#35b04a" />
                <circle cx="6" cy="6" r="3.200" fill="#35b04a" />
                <path d="M6 3.500v5M3.500 6h5" stroke="#fff" strokeWidth="1.500" />
              </svg>
            </TrayItem>
            <TrayItem aria-label="Windows 安全中心">
              <svg width="13" height="13" viewBox="0 0 13 13" aria-hidden="true">
                <path d="M6 .8l5 1.700v3.500c0 3-2 5-5 6-3-1-5-3-5-6V2.500zM6 1v11M1 6h10" fill="#fff" stroke="#333" />
                <path d="M9.500 7l3.500 6H6z" fill="#f5a81c" />
              </svg>
            </TrayItem>
            <TrayItem aria-label="电池">
              <svg width="13" height="9" viewBox="0 0 13 9" aria-hidden="true">
                <path d="M3 2h9v1.500h1v3h-1V8H3zM0 .5h4v3H2.500V5H1.500V3.500H0z" fill="#111" />
              </svg>
            </TrayItem>
            <TrayItem aria-label="网络"><Icon name="wifi" size={11} /></TrayItem>
            <TrayItem aria-label="音量"><Icon name="volume" size={12} /></TrayItem>
            <TrayItem>中</TrayItem>
            <TrayItem $wide><ImeMode>拼</ImeMode></TrayItem>
            <Clock>19:00<br />2022/1/12</Clock>
            <TrayItem $wide aria-label="便笺"><Icon name="notes" size={12} /></TrayItem>
            <Messages aria-label="通知">
              <svg width="13" height="13" viewBox="0 0 13 13" aria-hidden="true">
                <path d="M0 0h13v10H7l-3 3v-3H0z" fill="#111" />
                <path d="M2.500 3h8M2.500 5h8M2.500 7h5" stroke="#cfefdc" strokeWidth=".8" />
              </svg>
              <MessageCount>2</MessageCount>
            </Messages>
          </Tray>
        </TaskBar>
      </Shell>
    </>
  );
}
